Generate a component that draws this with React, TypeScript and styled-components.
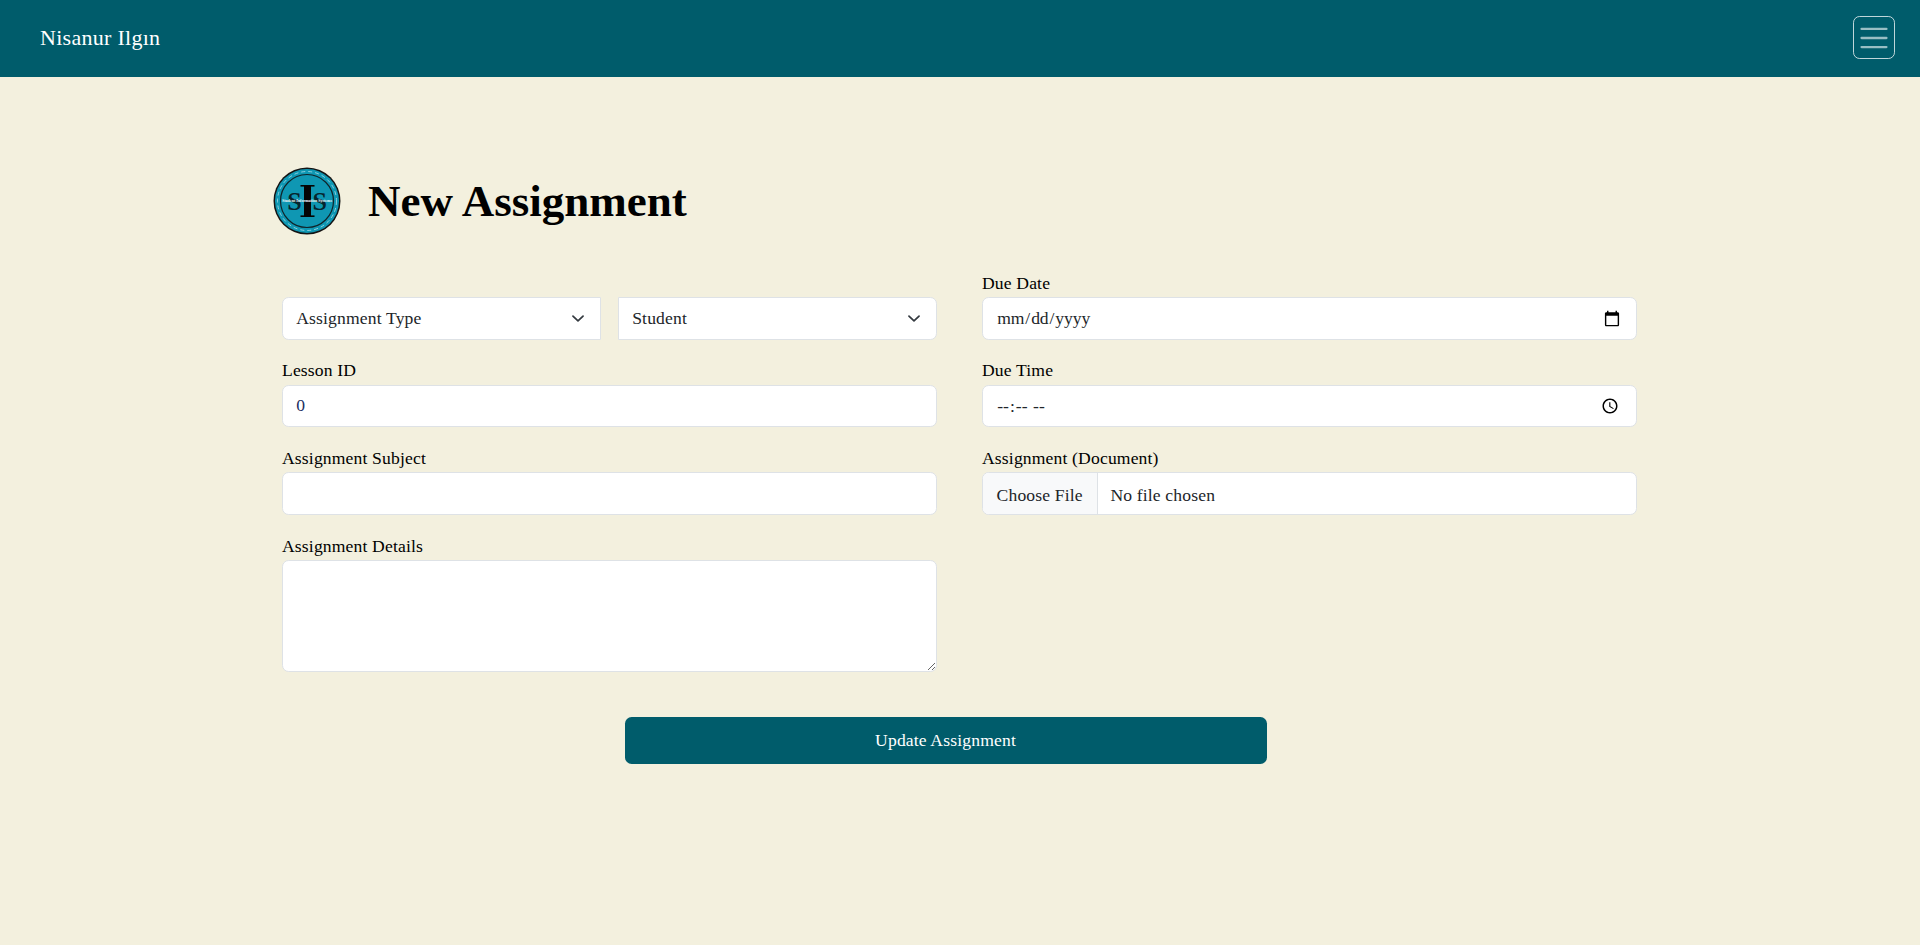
import React from "react";
import styled, { createGlobalStyle } from "styled-components";

const GlobalStyle = createGlobalStyle`
  html, body {
    margin: 0;
    padding: 0;
    background: #f3f0de;
  }
  body {
    font-family: "Liberation Serif", "Times New Roman", serif;
    font-size: 17.6px;
    line-height: 1.5;
    letter-spacing: 0.15px;
    color: #000;
  }
  * {
    box-sizing: border-box;
  }
`;

const Page = styled.div`
  min-height: 945px;
  display: flex;
  flex-direction: column;
`;

const NavBar = styled.nav`
  height: 77px;
  background: #005c6b;
  display: flex;
  align-items: center;
  justify-content: space-between;
  padding: 0 25px 2px 40px;
`;

const Brand = styled.a`
  color: #fff;
  font-size: 22px;
  letter-spacing: 0.28px;
  text-decoration: none;
`;

const Toggler = styled.button`
  width: 42px;
  height: 43px;
  padding: 0;
  background: transparent;
  border: 1.1px solid rgba(255, 255, 255, 0.75);
  border-radius: 6.6px;
  display: flex;
  align-items: center;
  justify-content: center;
`;

const Main = styled.main`
  width: 1356px;
  margin: 0 auto;
  padding: 90px 1px 0 0;
`;

const Header = styled.header`
  display: flex;
  align-items: center;
  gap: 27px;
  margin-left: -9px;
  height: 68px;
  margin-bottom: 35.8px;
`;

const Title = styled.h1`
  margin: 0;
  font-size: 45px;
  font-weight: 700;
  letter-spacing: 0;
  line-height: 1.2;
`;

const Form = styled.form`
  display: grid;
  grid-template-columns: 655px 655px;
  column-gap: 45px;
`;

const Column = styled.div`
  display: flex;
  flex-direction: column;
  gap: 18.8px;
`;

const Field = styled.div`
  display: flex;
  flex-direction: column;
`;

const Label = styled.label`
  display: block;
  height: 26.4px;
  line-height: 24.8px;
`;

const SelectRow = styled.div`
  display: grid;
  grid-template-columns: 319px 319px;
  column-gap: 17px;
  padding-top: 26.4px;
`;

const controlStyles = `
  display: block;
  width: 100%;
  height: 42.4px;
  padding: 6.6px 13.2px;
  font-family: inherit;
  font-size: 17.6px;
  line-height: 1.5;
  letter-spacing: inherit;
  color: #212529;
  background-color: #fff;
  border: 1.1px solid #dee2e6;
  border-radius: 6.6px;
  outline: none;
  margin: 0;
`;

const Select = styled.select<{ $side: "left" | "right" }>`
  ${controlStyles}
  appearance: none;
  padding-right: 40px;
  background-image: url("data:image/svg+xml,%3csvg xmlns='http://www.w3.org/2000/svg' viewBox='0 0 16 16'%3e%3cpath fill='none' stroke='%23343a40' stroke-linecap='round' stroke-linejoin='round' stroke-width='2' d='m2 5 6 6 6-6'/%3e%3c/svg%3e");
  background-repeat: no-repeat;
  background-position: right 13.2px center;
  background-size: 17.6px 13.2px;
  border-radius: ${(p) => (p.$side === "left" ? "6.6px 0 0 6.6px" : "0 6.6px 6.6px 0")};
`;

const Input = styled.input`
  ${controlStyles}
`;

const NumberInput = styled(Input)`
  color: #212e5f;
`;

const DateInput = styled(Input)`
  letter-spacing: -0.1px;
`;

const TimeInput = styled(Input)`
  letter-spacing: 0.3px;
`;

const FileInput = styled(Input)`
  overflow: hidden;
  &::file-selector-button {
    height: 43px;
    margin: -6.6px 12.2px -6.6px -13.2px;
    padding: 6.6px 14.4px 6.6px 13.6px;
    font: inherit;
    letter-spacing: inherit;
    color: #212529;
    background: #f8f9fa;
    border: 0 solid #dee2e6;
    border-right-width: 1.1px;
    border-radius: 0;
  }
`;

const TextArea = styled.textarea`
  ${controlStyles}
  height: 112px;
  resize: vertical;
`;

const SubmitRow = styled.div`
  display: flex;
  justify-content: center;
  margin-top: 45px;
  padding-right: 28px;
`;

const SubmitButton = styled.button`
  width: 642px;
  height: 47px;
  font-family: inherit;
  font-size: 17.6px;
  letter-spacing: inherit;
  color: #fff;
  background: #005c6b;
  border: 0;
  border-radius: 6.6px;
`;

function MenuIcon() {
  return (
    <svg width="34" height="34" viewBox="0 0 30 30" aria-hidden="true">
      <path
        stroke="rgba(255,255,255,0.6)"
        strokeLinecap="round"
        strokeMiterlimit="10"
        strokeWidth="2"
        d="M4 7h22M4 15h22M4 23h22"
      />
    </svg>
  );
}

const serif = "'Liberation Serif', serif";

function Logo() {
  return (
    <svg width="68" height="68" viewBox="0 0 68 68" role="img" aria-label="SIS logo">
      <circle cx="34" cy="34" r="33.5" fill="#141414" />
      <circle cx="34" cy="34" r="32" fill="#0f97b3" />
      <circle cx="34" cy="34" r="29.5" fill="none" stroke="#a9dbe6" strokeWidth="0.8" strokeDasharray="4 3" />
      <circle cx="34" cy="34" r="26.5" fill="#0f97b3" stroke="#10242a" strokeWidth="1.2" />
      <rect x="31" y="18.5" width="7" height="31" fill="#050505" />
      <rect x="27.5" y="18" width="14" height="1.6" fill="#050505" />
      <rect x="27.5" y="48.4" width="14" height="1.6" fill="#050505" />
      <text x="21.5" y="43" fontFamily={serif} fontSize="26" fontWeight="700" fill="#06252d" textAnchor="middle">
        S
      </text>
      <text x="46.7" y="43" fontFamily={serif} fontSize="26" fontWeight="700" fill="#06252d" textAnchor="middle">
        S
      </text>
      <text x="34" y="35.4" fontFamily={serif} fontSize="4" fontWeight="700" letterSpacing="0" fill="#eef8fa" textAnchor="middle">
        Student Information Systems
      </text>
    </svg>
  );
}

export default function App() {
  return (
    <Page>
      <GlobalStyle />
      <NavBar>
        <Brand href="#">Nisanur Ilgın</Brand>
        <Toggler type="button" aria-label="Toggle navigation">
          <MenuIcon />
        </Toggler>
      </NavBar>
      <Main>
        <Header>
          <Logo />
          <Title>New Assignment</Title>
        </Header>
        <Form>
          <Column>
            <SelectRow>
              <Select $side="left" defaultValue="type">
                <option value="type">Assignment Type</option>
              </Select>
              <Select $side="right" defaultValue="student">
                <option value="student">Student</option>
              </Select>
            </SelectRow>
            <Field>
              <Label>Lesson ID</Label>
              <NumberInput type="number" defaultValue={0} />
            </Field>
            <Field>
              <Label>Assignment Subject</Label>
              <Input type="text" />
            </Field>
            <Field>
              <Label>Assignment Details</Label>
              <TextArea />
            </Field>
          </Column>
          <Column>
            <Field>
              <Label>Due Date</Label>
              <DateInput type="date" />
            </Field>
            <Field>
              <Label>Due Time</Label>
              <TimeInput type="time" />
            </Field>
            <Field>
              <Label>Assignment (Document)</Label>
              <FileInput type="file" />
            </Field>
          </Column>
        </Form>
        <SubmitRow>
          <SubmitButton type="button">Update Assignment</SubmitButton>
        </SubmitRow>
      </Main>
    </Page>
  );
}
